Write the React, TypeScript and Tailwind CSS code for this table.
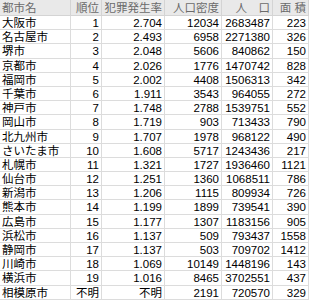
import React from 'react';

const HEADERS = ['都市名', '順位', '犯罪発生率', '人口密度', '人　口', '面 積'];

const ROWS: string[][] = [
    ['大阪市', '1', '2.704', '12034', '2683487', '223'],
    ['名古屋市', '2', '2.493', '6958', '2271380', '326'],
    ['堺市', '3', '2.048', '5606', '840862', '150'],
    ['京都市', '4', '2.026', '1776', '1470742', '828'],
    ['福岡市', '5', '2.002', '4408', '1506313', '342'],
    ['千葉市', '6', '1.911', '3543', '964055', '272'],
    ['神戸市', '7', '1.748', '2788', '1539751', '552'],
    ['岡山市', '8', '1.719', '903', '713433', '790'],
    ['北九州市', '9', '1.707', '1978', '968122', '490'],
    ['さいたま市', '10', '1.608', '5717', '1243436', '217'],
    ['札幌市', '11', '1.321', '1727', '1936460', '1121'],
    ['仙台市', '12', '1.251', '1360', '1068511', '786'],
    ['新潟市', '13', '1.206', '1115', '809934', '726'],
    ['熊本市', '14', '1.199', '1899', '739541', '390'],
    ['広島市', '15', '1.177', '1307', '1183156', '905'],
    ['浜松市', '16', '1.137', '509', '793437', '1558'],
    ['静岡市', '17', '1.137', '503', '709702', '1412'],
    ['川崎市', '18', '1.069', '10149', '1448196', '143'],
    ['横浜市', '19', '1.016', '8465', '3702551', '437'],
    ['相模原市', '不明', '不明', '2191', '720570', '329'],
];

const font = "font-['Liberation_Sans','Noto_Sans_CJK_JP',sans-serif]";

export default function App() {
    return (
        <div className={`w-[309px] h-[300px] overflow-hidden bg-white ${font}`}>
            <div className="grid grid-cols-[71px_31px_63px_57px_51px_36px]">
                {HEADERS.map((h, i) => (
                    <div
                        key={h}
                        className={`h-[16px] leading-[16px] text-[11.5px] bg-[#e9e9e9] text-[#6b6b6b] border-r border-b border-[#d4d4d4] px-[2px] whitespace-nowrap overflow-hidden ${i === 0 ? 'text-left' : 'text-right'}`}
                    >
                        {h}
                    </div>
                ))}
                {ROWS.map((row) =>
                    row.map((cell, i) => (
                        <div
                            key={`${row[0]}-${i}`}
                            className={`h-[14.2px] leading-[14px] text-[11.5px] text-black border-r border-b border-[#dcdcdc] px-[2px] whitespace-nowrap overflow-hidden ${i === 0 ? 'text-left' : 'text-right'}`}
                        >
                            {cell}
                        </div>
                    ))
                )}
            </div>
        </div>
    );
}
